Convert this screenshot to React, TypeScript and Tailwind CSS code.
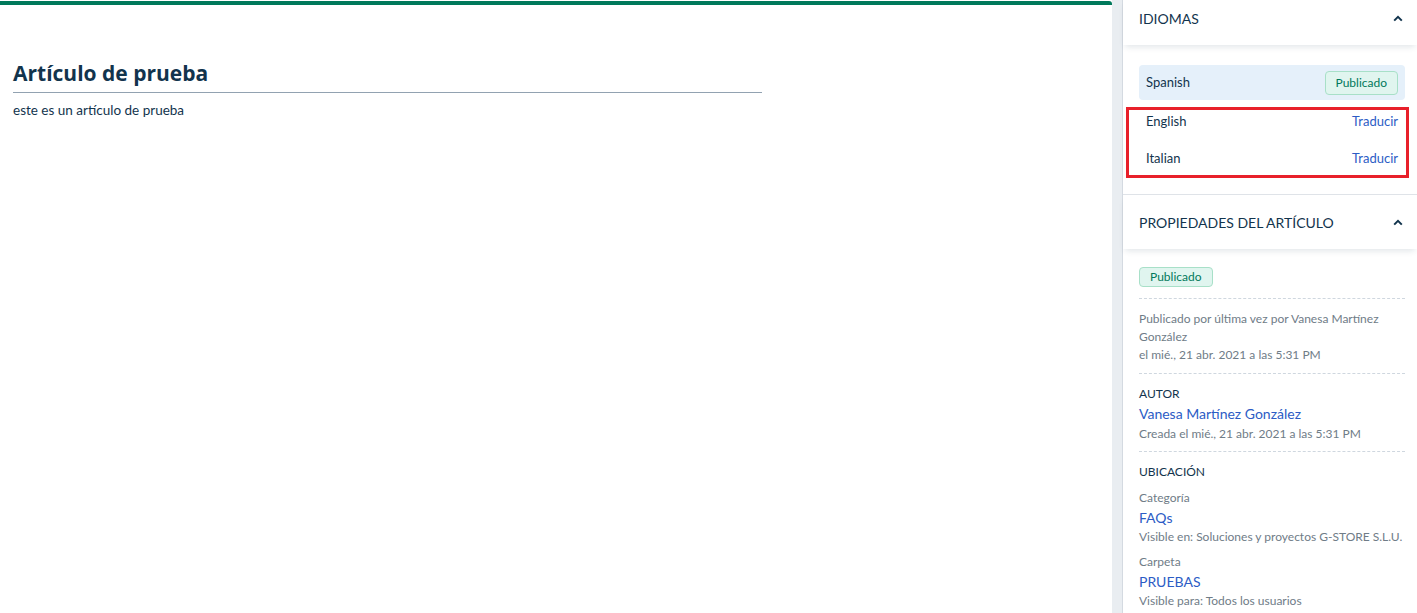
import React from 'react';

const font = { fontFamily: 'Lato, "Open Sans", sans-serif' };
const titleFont = { fontFamily: '"Open Sans", Lato, sans-serif' };

function ChevronUp() {
  return (
    <svg width="10" height="7" viewBox="0 0 10 7" className="text-[#12344d]">
      <path d="M1.2 5.6 L5 1.8 L8.8 5.6" fill="none" stroke="currentColor" strokeWidth="2" />
    </svg>
  );
}

function SectionHeader({ title, className }: { title: string; className: string }) {
  return (
    <div className={`relative z-10 flex shrink-0 items-center justify-between bg-white pl-4 pr-[14px] shadow-[0_4px_6px_-2px_rgba(18,52,77,0.12)] ${className}`}>
      <span className="text-[14px] uppercase text-[#12344d]">{title}</span>
      <ChevronUp />
    </div>
  );
}

function Dashed() {
  return <div className="border-t border-dashed border-[#cfd7df]" />;
}

function Badge({ className }: { className: string }) {
  return (
    <span className={`inline-flex items-center rounded-[4px] border border-[#a8e0c8] bg-[#e0f5ef] px-[10px] text-[12px] text-[#00795b] ${className}`}>
      Publicado
    </span>
  );
}

export default function App() {
  return (
    <div className="flex h-[613px] w-[1417px] overflow-hidden bg-white" style={font}>
      {/* ── Main article ── */}
      <main className="flex w-[1112px] flex-col">
        <div className="mt-px h-1 rounded-tr-[3px] bg-[#00795b]" />
        <div className="px-[13px] pt-[54px]">
          <div className="w-[749px] border-b border-[#92a2b1] pb-[5px]">
            <h1 className="text-[21px] font-bold leading-[28px] text-[#12344d]" style={titleFont}>
              Artículo de prueba
            </h1>
          </div>
          <p className="mt-[8px] text-[13.5px] leading-[18px] text-[#12344d]">este es un artículo de prueba</p>
        </div>
      </main>

      {/* ── Gutter ── */}
      <div className="w-[11px] border-r border-[#d4dae1] bg-[#e9edf1]" />

      {/* ── Sidebar ── */}
      <aside className="relative flex-1">
        <SectionHeader title="Idiomas" className="h-[45px] pb-[9px]" />
        <div className="pl-4 pr-3 pt-[20px] pb-[20px] text-[13px] text-[#12344d]">
          <div className="flex h-[35px] items-center justify-between rounded-[4px] bg-[#e5f0fa] px-[7px]">
            <span>Spanish</span>
            <Badge className="h-[24px]" />
          </div>
          <div className="flex h-[37px] items-center justify-between px-[7px] pt-[6px]">
            <span>English</span>
            <span className="text-[#2c5cc5]">Traducir</span>
          </div>
          <div className="flex h-[37px] items-center justify-between px-[7px] pt-[6px]">
            <span>Italian</span>
            <span className="text-[#2c5cc5]">Traducir</span>
          </div>
        </div>

        <div className="border-t border-[#dfe3e8]" />
        <SectionHeader title="Propiedades del artículo" className="h-[54px]" />

        <div className="pl-4 pr-3 pt-[18px] text-[12px] leading-[18px]">
          <Badge className="h-[20px]" />
          <div className="mt-[11px]"><Dashed /></div>
          <div className="pt-[11px] pb-[9px] text-[#6f7c87]">
            <p>Publicado por última vez por Vanesa Martínez González</p>
            <p>el mié., 21 abr. 2021 a las 5:31 PM</p>
          </div>
          <Dashed />
          <div className="pt-[11px] pb-[8px]">
            <p className="text-[#12344d]">AUTOR</p>
            <p className="text-[14px] leading-[22px] text-[#2c5cc5]">Vanesa Martínez González</p>
            <p className="text-[#6f7c87]">Creada el mié., 21 abr. 2021 a las 5:31 PM</p>
          </div>
          <Dashed />
          <div className="pt-[11px]">
            <p className="text-[#12344d]">UBICACIÓN</p>
            <p className="mt-[8px] text-[#6f7c87]">Categoría</p>
            <p className="text-[14px] leading-[21px] text-[#2c5cc5]">FAQs</p>
            <p className="text-[#6f7c87]">Visible en: Soluciones y proyectos G-STORE S.L.U.</p>
            <p className="mt-[7px] text-[#6f7c87]">Carpeta</p>
            <p className="text-[14px] leading-[21px] text-[#2c5cc5]">PRUEBAS</p>
            <p className="text-[#6f7c87]">Visible para: Todos los usuarios</p>
          </div>
        </div>

        {/* annotation box drawn over the untranslated languages */}
        <div className="pointer-events-none absolute left-[3px] top-[107px] h-[71px] w-[283px] border-[3px] border-[#e8202a]" />
      </aside>
    </div>
  );
}
